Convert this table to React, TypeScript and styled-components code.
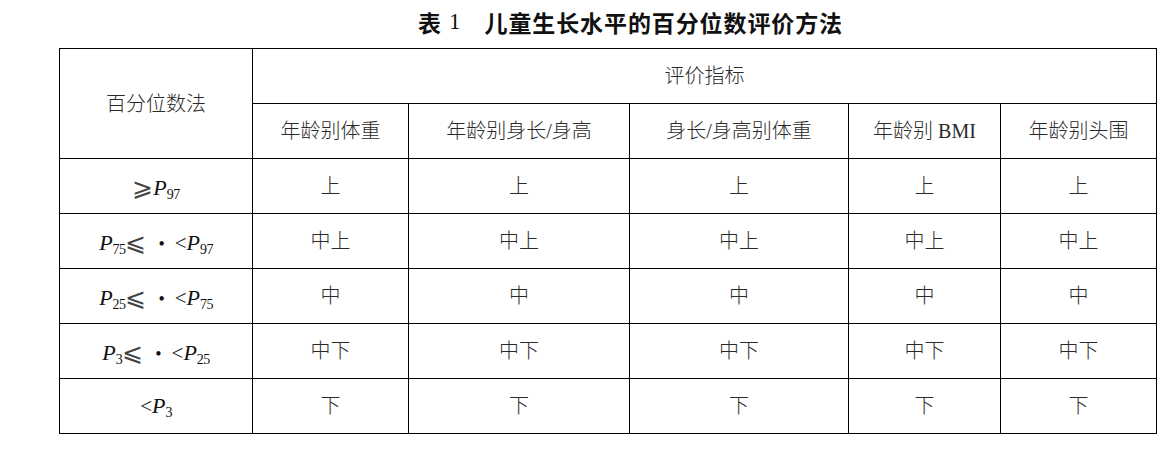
import React from "react";
import styled, { createGlobalStyle } from "styled-components";

const GlobalStyle = createGlobalStyle`
  html, body {
    margin: 0;
    padding: 0;
    background: #fff;
  }
  body {
    font-family: "Liberation Serif", "Noto Sans CJK SC", serif;
    color: #1a1a1a;
  }
`;

const Page = styled.div`
  width: 1172px;
  height: 458px;
  padding-left: 59px;
  box-sizing: border-box;
  overflow: hidden;
`;

const Caption = styled.h1`
  margin: 0;
  height: 48px;
  padding: 0 0 4px 359px;
  box-sizing: border-box;
  display: flex;
  align-items: center;
  font-family: "Noto Sans CJK SC", sans-serif;
  font-size: 23px;
  font-weight: 700;
  color: #111;
`;

const CaptionTag = styled.span`
  margin-right: 8px;
`;

const CaptionNum = styled.span`
  font-family: "Liberation Serif", serif;
  font-weight: 400;
  font-size: 23px;
  margin-right: 24px;
`;

const CaptionText = styled.span`
  letter-spacing: 0.9px;
`;

const Table = styled.table`
  border-collapse: collapse;
  table-layout: fixed;
  width: 1097px;
`;

const Cell = styled.td`
  border: 1px solid #000;
  height: 54px;
  padding: 0;
  text-align: center;
  vertical-align: middle;
  font-size: 20px;
  line-height: 1;
  font-weight: 300;
  color: #2a2a2a;
  white-space: nowrap;
`;

const Var = styled.i`
  font-family: "Liberation Serif", serif;
  font-style: italic;
  font-size: 22px;
  color: #111;
`;

const Sub = styled.span`
  font-family: "Liberation Serif", serif;
  font-style: normal;
  font-size: 14px;
  letter-spacing: -0.6px;
  position: relative;
  top: 4px;
  color: #111;
`;

// 关系符号 ⩽ ⩾
const Rel = styled.span`
  font-family: "DejaVu Sans", sans-serif;
  font-size: 25px;
  font-weight: 200;
  line-height: 1;
  color: #444;
  position: relative;
  top: 1px;
`;

const Less = styled.span`
  font-family: "Liberation Serif", serif;
  font-size: 21px;
  color: #222;
`;

const Dot = styled.span`
  font-family: "Liberation Serif", serif;
  font-size: 18px;
  margin: 0 10px 0 12px;
  color: #111;
`;

const P = ({ n }: { n: string }) => (
  <>
    <Var>P</Var>
    <Sub>{n}</Sub>
  </>
);

const Range = ({ from, to }: { from: string; to: string }) => (
  <>
    <P n={from} />
    <Rel>⩽</Rel>
    <Dot>•</Dot>
    <Less>&lt;</Less>
    <P n={to} />
  </>
);

const cols = [193, 156, 221, 219, 152, 156];
const metrics = ["年龄别体重", "年龄别身长/身高", "身长/身高别体重", "年龄别 BMI", "年龄别头围"];

const rows: { label: React.ReactNode; value: string }[] = [
  {
    label: (
      <>
        <Rel>⩾</Rel>
        <P n="97" />
      </>
    ),
    value: "上",
  },
  { label: <Range from="75" to="97" />, value: "中上" },
  { label: <Range from="25" to="75" />, value: "中" },
  { label: <Range from="3" to="25" />, value: "中下" },
  {
    label: (
      <>
        <Less>&lt;</Less>
        <P n="3" />
      </>
    ),
    value: "下",
  },
];

export default function App() {
  return (
    <Page>
      <GlobalStyle />
      <Caption>
        <CaptionTag>表</CaptionTag>
        <CaptionNum>1</CaptionNum>
        <CaptionText>儿童生长水平的百分位数评价方法</CaptionText>
      </Caption>
      <Table>
        <colgroup>
          {cols.map((w, i) => (
            <col key={i} style={{ width: w }} />
          ))}
        </colgroup>
        <tbody>
          <tr>
            <Cell rowSpan={2}>百分位数法</Cell>
            <Cell colSpan={5}>评价指标</Cell>
          </tr>
          <tr>
            {metrics.map((m) => (
              <Cell key={m}>{m}</Cell>
            ))}
          </tr>
          {rows.map((r, i) => (
            <tr key={i}>
              <Cell>{r.label}</Cell>
              {metrics.map((m) => (
                <Cell key={m}>{r.value}</Cell>
              ))}
            </tr>
          ))}
        </tbody>
      </Table>
    </Page>
  );
}
